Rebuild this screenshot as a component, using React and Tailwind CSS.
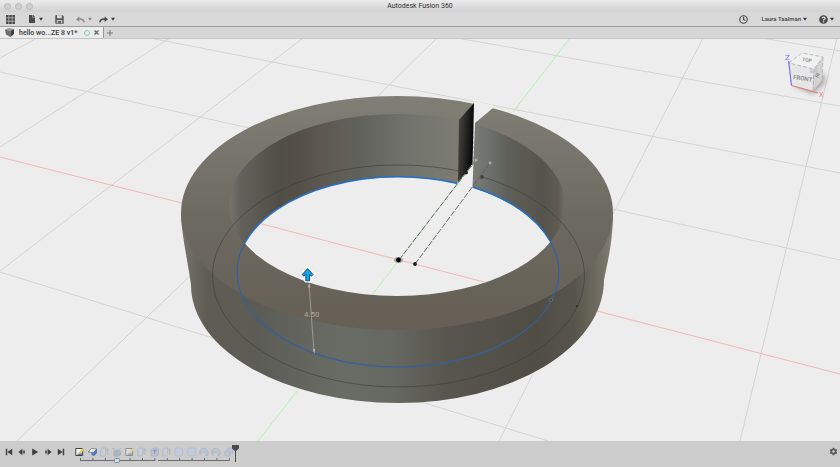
import React from "react";
import { FaQuestionCircle, FaFile } from "react-icons/fa";
import { FiClock } from "react-icons/fi";
import { IoMdSettings } from "react-icons/io";

const GRID_LINES = [
  [0, 58, 37, 38],
  [0, 147, 170, 38],
  [0, 271, 303, 38],
  [17, 441, 190, 276],
  [377, 97, 437, 38],
  [613, 214, 703, 38],
  [499, 441, 537, 366],
  [740, 441, 837, 38],
  [0, 72, 249, 128],
  [613, 209, 840, 260],
  [150, 38, 420, 91],
  [420, 91, 840, 173],
  [457, 38, 840, 106],
  [762, 38, 840, 51],
  [0, 272, 216, 339],
  [415, 400, 548, 441],
];

const FEATURES = [
  "sketch", "extrude", "box", "combine", "sketch", "box", "join", "box", "solid", "solid", "fillet", "fillet", "mirror",
];

const Caret = () => (
  <svg viewBox="0 0 6 6" className="w-[4px] h-[4px] text-[#3c3c3c]" fill="currentColor">
    <path d="M0 1h6L3 5.5z" />
  </svg>
);

const TitleBar = () => (
  <header className="relative flex h-[12px] shrink-0 items-center bg-linear-to-b from-[#ebebeb] to-[#d2d2d2]">
    <div className="flex gap-[4px] pl-[4px]">
      {["Close", "Minimize", "Zoom"].map((name) => (
        <button key={name} aria-label={name} className="size-[7px] rounded-full border border-[#bababa] bg-[#d0d0d0]" />
      ))}
    </div>
    <h1 className="absolute inset-x-0 text-center text-[7px] leading-[12px] text-[#2e2e2e]">Autodesk Fusion 360</h1>
  </header>
);

const Toolbar = () => (
  <div className="flex h-[15px] shrink-0 items-center border-b border-[#9d9d9d] bg-[#d8d8d8] text-[#4a4a4a]">
    <button aria-label="Data panel" className="ml-[6px]">
      <svg viewBox="0 0 9 9" className="size-[9px]" fill="currentColor">
        {[0, 3.2, 6.4].map((y) => [0, 3.2, 6.4].map((x) => <rect key={`${x}-${y}`} x={x} y={y} width="2.6" height="2.6" />))}
      </svg>
    </button>
    <button aria-label="File" className="ml-[13px] flex items-center gap-[3px]">
      <FaFile className="w-[8px] h-[8px]" />
      <Caret />
    </button>
    <button aria-label="Save" className="ml-[12px]">
      <svg viewBox="0 0 9 9" className="size-[9px]">
        <path d="M.3.3h7.4l1 1v7.4H.3z" fill="#555" />
        <path d="M2 .3h4.8v3H2zM1.8 5h5.4v3.2H1.8z" fill="#dadada" />
        <path d="M2.8 5.8h3.4v2.9H2.8z" fill="#666" />
      </svg>
    </button>
    <button aria-label="Undo" className="ml-[12px] flex items-center gap-[3px] opacity-50">
      <svg viewBox="0 0 9 7" className="w-[9px] h-[7px]">
        <path d="M0 3.2 3.4.4v5.6z" fill="#444" />
        <path d="M2.8 3.2C6 2.8 7.8 4 8.2 6.4" fill="none" stroke="#444" strokeWidth="1.5" />
      </svg>
      <Caret />
    </button>
    <button aria-label="Redo" className="ml-[7px] flex items-center gap-[3px]">
      <svg viewBox="0 0 9 7" className="w-[9px] h-[7px]">
        <path d="M9 3.2 5.6.4v5.6z" fill="#444" />
        <path d="M6.2 3.2C3 2.8 1.2 4 .8 6.4" fill="none" stroke="#444" strokeWidth="1.5" />
      </svg>
      <Caret />
    </button>
    <button aria-label="Job status" className="ml-auto">
      <FiClock className="size-[9px]" strokeWidth={3} />
    </button>
    <button className="ml-[14px] flex items-center gap-[2px] text-[6px] leading-[14px] font-medium text-[#3c3c3c]">
      Laura Taalman
      <Caret />
    </button>
    <button aria-label="Help" className="mr-[6px] ml-[12px] flex items-center gap-[2px]">
      <FaQuestionCircle className="size-[9px]" />
      <Caret />
    </button>
  </div>
);

const TabBar = () => (
  <nav className="flex h-[12px] shrink-0 items-stretch border-b border-[#c4c4c4] bg-[#d6d6d6]">
    <div className="flex w-[104px] items-center border-r border-[#9a9a9a] bg-[#ececec] pl-[5px]">
      <svg viewBox="0 0 9 9" className="size-[9px]">
        <path d="M0 1.5 4 0l5 1-3.5 2z" fill="#999" />
        <path d="M0 1.5 5.5 3v6L1 6.5z" fill="#6d6d6d" />
        <path d="M5.5 3 9 1v5L5.5 9z" fill="#3f3f3f" />
      </svg>
      <a href="#design" className="ml-[5px] w-[62px] whitespace-nowrap pt-px text-[7px] leading-[11px] font-semibold text-[#444]">
        hello wo...ZE 8 v1*
      </a>
      <span className="ml-[3px] size-[6px] rounded-full border border-[#7fd3bd]" />
      <button aria-label="Close tab" className="ml-[4px]">
        <svg viewBox="0 0 6 6" className="size-[5px]" stroke="#666" strokeWidth="1.6">
          <path d="M.6.6l4.8 4.8M5.4.6.6 5.4" />
        </svg>
      </button>
    </div>
    <button aria-label="New tab" className="ml-[3px] flex items-center">
      <svg viewBox="0 0 6 6" className="size-[6px]" stroke="#777" strokeWidth="1">
        <path d="M3 0v6M0 3h6" />
      </svg>
    </button>
  </nav>
);

const ViewCube = () => (
  <g>
    <path d="M794 86 813 94 825 83 824 74 812 74z" fill="#777" opacity="0.6" filter="url(#cubeShadow)" />
    <path d="M789 63 802 53 823 57 814 69z" fill="#f1f1f1" />
    <path d="M789 63 814 69 813 91 792 85z" fill="#e6e6e6" />
    <path d="M814 69 823 57 822 80 813 91z" fill="#d3d3d3" />
    <g fill="none" stroke="#a5a5a5" strokeWidth="0.7" strokeDasharray="4 2">
      <path d="M789 63 802 53 823 57 814 69z" />
      <path d="M814 69 813 91M823 57 822 80" />
    </g>
    <path d="M810 69l4 .8 3-3.5v5l-3 2.6-4-1.2z" fill="#c3c6cd" opacity="0.8" />
    <g fontWeight="500" fill="#84878c">
      <text x="793" y="79" fontSize="6" transform="rotate(9 793 79)">FRONT</text>
      <text x="802" y="61" fontSize="5" transform="rotate(9 802 61)">TOP</text>
      <text x="818" y="78" fontSize="5" transform="rotate(-65 818 78)">RI</text>
    </g>
    <path d="M788.6 61 791.5 85.5" stroke="#7070f0" strokeWidth="1.2" />
    <path d="M791.5 85.5 818 93" stroke="#e87878" strokeWidth="1.2" />
    <text x="785" y="59.5" fontSize="8" fill="#7272f5">Z</text>
    <text x="819" y="97" fontSize="7" fill="#f56f6f">X</text>
  </g>
);

// The ring: outer top edge, hole top edge and hole bottom edge are ellipses.
const Ring = () => (
  <g>
    <path
      d="M181 213C181 232 188 262 191 285A207 118 0 0 0 398 403A206 123 0 0 0 604 280C608 260 613 240 613 213z"
      fill="url(#outerWall)"
    />
    <ellipse cx="397" cy="213" rx="216" ry="117" fill="url(#topFace)" />
    <g clipPath="url(#holeTop)">
      <rect x="225" y="110" width="244" height="190" fill="url(#innerLeft)" />
      <rect x="469" y="110" width="100" height="190" fill="url(#innerRight)" />
      <ellipse cx="398" cy="272" rx="161" ry="95" fill="#ededed" />
    </g>
    <path d="M474 101 493 105V108L475 123 472.5 188 457 184 460 175z" fill="#ededed" />
    <path d="M459 120 474 103 472.5 165 458 183z" fill="url(#cutFace)" />
    <path d="M473.5 126V184" stroke="#666" strokeWidth="0.6" strokeDasharray="3 2" opacity="0.5" />
  </g>
);

const ARROW = "M307.6 268.6 313 274.4 311.6 276.2 309.6 274.6V280.8H305.8V274.6L303.7 276.2 302.3 274.4z";

const Sketch = () => (
  <g fill="none">
    <g clipPath="url(#holeTop)">
      <g clipPath="url(#holeBottom)">
        <path d="M182 203 399 260 484 282 597 311" stroke="#f5b5b5" />
        <path d="M298 390 399 260" stroke="#b4f0b4" />
      </g>
    </g>
    <path
      d="M465 172.3A186 111 0 0 0 212.5 276A186 111 0 0 0 584.5 276A186 111 0 0 0 482 176.8"
      stroke="#3d3c38" strokeWidth="0.8" opacity="0.75"
    />
    <path d="M246 241A161 95 0 0 0 237 272A161 95 0 0 0 559 272A161 95 0 0 0 550 241" stroke="#2f629f" strokeWidth="1.2" />
    <path d="M246 241A161 95 0 0 1 458 183.6M473 187A161 95 0 0 1 550 241" stroke="#2570c8" strokeWidth="1.5" />
    <path d="M399 260 458 183 476 160" stroke="#b4ecb4" />
    <path d="M399 260 458 183 476 160M415 264 473 186 490 163" stroke="#5c5c5c" strokeWidth="0.9" strokeDasharray="6 1.5" />
    <ellipse cx="398.5" cy="260" rx="4.5" ry="3" fill="#aaa" />
    <circle cx="398.5" cy="260" r="2.4" fill="#000" />
    <circle cx="415" cy="264" r="1.9" fill="#1a1a1a" />
    <circle cx="466" cy="172.5" r="2" fill="#222" />
    <circle cx="482" cy="177" r="2" fill="#454541" />
    <circle cx="476" cy="160" r="1.5" fill="#aaa" />
    <circle cx="490" cy="163" r="1.4" fill="#aaa" />
    <circle cx="551" cy="300" r="1.6" stroke="#6b7580" fill="#3d4348" strokeWidth="0.8" />
    <circle cx="577" cy="306" r="1.3" fill="#35342f" />
    <path d="M309 284 314 352" stroke="#aaa69c" strokeWidth="0.8" />
    <path d="M308 287.5 309 283 310.5 287.5zM312.8 349 314.3 354 315.2 349z" fill="#bbb7ad" />
    <text x="304" y="317" fontSize="8" fill="#aca89f">4.50</text>
    <path d={ARROW} stroke="#fff" strokeWidth="3.4" strokeLinejoin="round" />
    <path d={ARROW} fill="#0fa5ee" stroke="#14435c" strokeWidth="0.9" />
  </g>
);

const Viewport = () => (
  <main className="min-h-0 flex-1 bg-[#ededed]">
    <svg viewBox="0 39 840 402" preserveAspectRatio="xMidYMid slice" className="block size-full" role="img" aria-label="Ring model">
      <defs>
        <linearGradient id="topFace" x1="0" y1="0" x2="0" y2="1">
          <stop offset="0" stopColor="#807f76" />
          <stop offset="0.5" stopColor="#6d6a61" />
          <stop offset="1" stopColor="#655f55" />
        </linearGradient>
        <linearGradient id="outerWall" gradientUnits="userSpaceOnUse" x1="181" y1="0" x2="613" y2="0">
          <stop offset="0" stopColor="#77746a" />
          <stop offset="0.06" stopColor="#5f5c53" />
          <stop offset="0.18" stopColor="#5c5c56" />
          <stop offset="0.36" stopColor="#696b65" />
          <stop offset="0.49" stopColor="#666862" />
          <stop offset="0.62" stopColor="#57554d" />
          <stop offset="0.82" stopColor="#504d45" />
          <stop offset="0.91" stopColor="#57544b" />
          <stop offset="0.97" stopColor="#716e63" />
          <stop offset="1" stopColor="#807d71" />
        </linearGradient>
        <linearGradient id="innerLeft" gradientUnits="userSpaceOnUse" x1="229" y1="0" x2="459" y2="0">
          <stop offset="0" stopColor="#75746b" />
          <stop offset="0.05" stopColor="#62615b" />
          <stop offset="0.22" stopColor="#514e46" />
          <stop offset="0.3" stopColor="#545047" />
          <stop offset="0.42" stopColor="#5e5a52" />
          <stop offset="0.55" stopColor="#60605a" />
          <stop offset="0.78" stopColor="#71736c" />
          <stop offset="1" stopColor="#7c7c73" />
        </linearGradient>
        <linearGradient id="innerRight" gradientUnits="userSpaceOnUse" x1="473" y1="0" x2="566" y2="0">
          <stop offset="0" stopColor="#797b74" />
          <stop offset="0.18" stopColor="#6d706a" />
          <stop offset="0.38" stopColor="#5e5f59" />
          <stop offset="0.75" stopColor="#56534b" />
          <stop offset="0.92" stopColor="#605c53" />
          <stop offset="1" stopColor="#757167" />
        </linearGradient>
        <linearGradient id="cutFace" x1="0" y1="0" x2="1" y2="0.3">
          <stop offset="0" stopColor="#4c4b45" />
          <stop offset="0.8" stopColor="#151513" />
          <stop offset="1" stopColor="#060606" />
        </linearGradient>
        <clipPath id="holeTop">
          <ellipse cx="397" cy="205" rx="168" ry="91" />
        </clipPath>
        <clipPath id="holeBottom">
          <ellipse cx="398" cy="272" rx="161" ry="95" />
        </clipPath>
        <filter id="cubeShadow" x="-50%" y="-50%" width="200%" height="200%">
          <feGaussianBlur stdDeviation="2.5" />
        </filter>
      </defs>
      <g stroke="#d3d3d3">
        {GRID_LINES.map(([x1, y1, x2, y2]) => (
          <line key={`${x1}-${y1}`} x1={x1} y1={y1} x2={x2} y2={y2} />
        ))}
      </g>
      <path d="M0 157 182 203M597 311 840 374" stroke="#f5b5b5" fill="none" />
      <path d="M258 441 298 390M513 112 570 38" stroke="#b0f0b0" fill="none" />
      <Ring />
      <Sketch />
      <ViewCube />
    </svg>
  </main>
);

const FeatureIcon = ({ type }) => {
  switch (type) {
    case "sketch":
      return (
        <g>
          <path d="M.8 1.5h6.9v7H.8z" fill="#f6f6f0" stroke="#3b4350" />
          <path d="M2 7.5 8 1l1.5 1.5-6 5.5z" fill="#e8c93a" />
          <path d="M2 7.5 3.5 8 7 8v-2z" fill="#4d79b5" />
        </g>
      );
    case "extrude":
      return (
        <g>
          <path d="M0 5 3.5 1.5 9 2 5.5 5.5z" fill="#eee" stroke="#666" strokeWidth="0.7" />
          <path d="M3.5 5.5h2L9 2v4L6 9 3.5 8z" fill="#4b78c2" />
        </g>
      );
    case "box":
      return (
        <g>
          <path d="M.8 2.5 2.5 1h3.3v6.5L4.2 9H.8z" fill="#c6d3e6" stroke="#8797ad" strokeWidth="0.8" />
          <path d="M7.8 8V2.5M6.6 3.5 7.8 1.5 9 3.5" fill="none" stroke="#8797ad" strokeWidth="0.9" />
        </g>
      );
    case "combine":
      return (
        <g>
          <path d="M2 4h6.5v4L7 9H2z" fill="#7f9ec9" stroke="#7d8ba1" />
          <path d="M.5 1 3 3.5h3L9 1M4.5 5v3" fill="none" stroke="#7d8ba1" />
        </g>
      );
    case "join":
      return (
        <g>
          <path d="M1 2.5 3 1h5.5v6.5L7 9H1z" fill="#9db3d5" stroke="#7f93b2" strokeWidth="0.8" />
          <path d="M3 3.5h3.5M4.7 3.5V7" stroke="#4d6791" strokeWidth="1.3" />
        </g>
      );
    case "solid":
      return <rect x="0.8" y="1" width="8" height="8" rx="2" fill="#b9cbea" stroke="#90a7ce" strokeWidth="0.8" />;
    case "fillet":
      return (
        <g>
          <path d="M.8 4C2 1.5 5 .8 6.5 1.5L9 4.5V8L7 9V6.5C5 4 3 5 2.5 7z" fill="#a9bee2" stroke="#7f93b2" strokeWidth="0.8" />
          <path d="M.8 4v3.5l2 1" fill="none" stroke="#7f93b2" strokeWidth="0.8" />
        </g>
      );
    default:
      return (
        <g fill="#a8bde2" stroke="#8097bf" strokeWidth="0.8">
          <rect x="3.5" y="1" width="5.5" height="5" rx="1.5" />
          <rect x="0.8" y="4" width="5.5" height="5" rx="1.5" />
        </g>
      );
  }
};

const PLAYBACK = [
  ["Go to start", "M1 1h1.8v8H1zM9 1v8L3 5z"],
  ["Step back", "M5.5 1v8L.5 5zM6.5 3v4h2V3z"],
  ["Play", "M1.5.5v9L9 5z"],
  ["Step forward", "M4.5 1v8l5-4zM1.5 3v4h2V3z"],
  ["Go to end", "M7.2 1H9v8H7.2zM1 1v8l6-4z"],
];

const Timeline = () => (
  <footer className="flex h-[26px] shrink-0 items-start bg-[#cccccc]">
    <div className="mt-[7px] flex gap-[5px] pl-[5px]">
      {PLAYBACK.map(([name, d]) => (
        <button key={name} aria-label={name}>
          <svg viewBox="0 0 10 10" className="size-[8px]" fill="#3e3e3e">
            <path d={d} />
          </svg>
        </button>
      ))}
    </div>
    <div className="relative mt-[6px] ml-[9px] w-[161px]">
      <div className="flex">
        {FEATURES.map((type, i) => (
          <button key={i} aria-label={`${type} ${i + 1}`} className="flex flex-1 justify-center">
            <svg viewBox="0 0 10 10" className={i < 2 ? "size-[10px]" : "size-[10px] opacity-45"}>
              <FeatureIcon type={type} />
            </svg>
          </button>
        ))}
      </div>
      <svg viewBox="0 0 161 6" className="h-[6px] w-full" fill="none" stroke="#6c6c6c" strokeWidth="1">
        <path d="M6.5 3.5H81M84 3.5H155" />
        {FEATURES.map((type, i) => (
          <path key={i} d={`M${6.5 + i * 12.4} 1v3`} />
        ))}
        <rect x="40.5" y="1.5" width="5" height="4" rx="1" fill="#d5dbe2" stroke="#7b8793" />
      </svg>
      <svg viewBox="0 0 7 17" className="absolute -top-[2px] left-[158px] h-[17px] w-[7px]" fill="#4a4a4a">
        <path d="M0 0h7v3.5L4 6v11H3V6L0 3.5z" />
      </svg>
    </div>
    <button aria-label="Timeline settings" className="mt-[6px] mr-[2px] ml-auto">
      <IoMdSettings className="size-[9px] text-[#555]" />
    </button>
  </footer>
);

const App = () => (
  <div className="flex h-screen flex-col overflow-hidden bg-[#ededed] font-['Roboto','Liberation_Sans',sans-serif]">
    <TitleBar />
    <Toolbar />
    <TabBar />
    <Viewport />
    <Timeline />
  </div>
);

export default App;
